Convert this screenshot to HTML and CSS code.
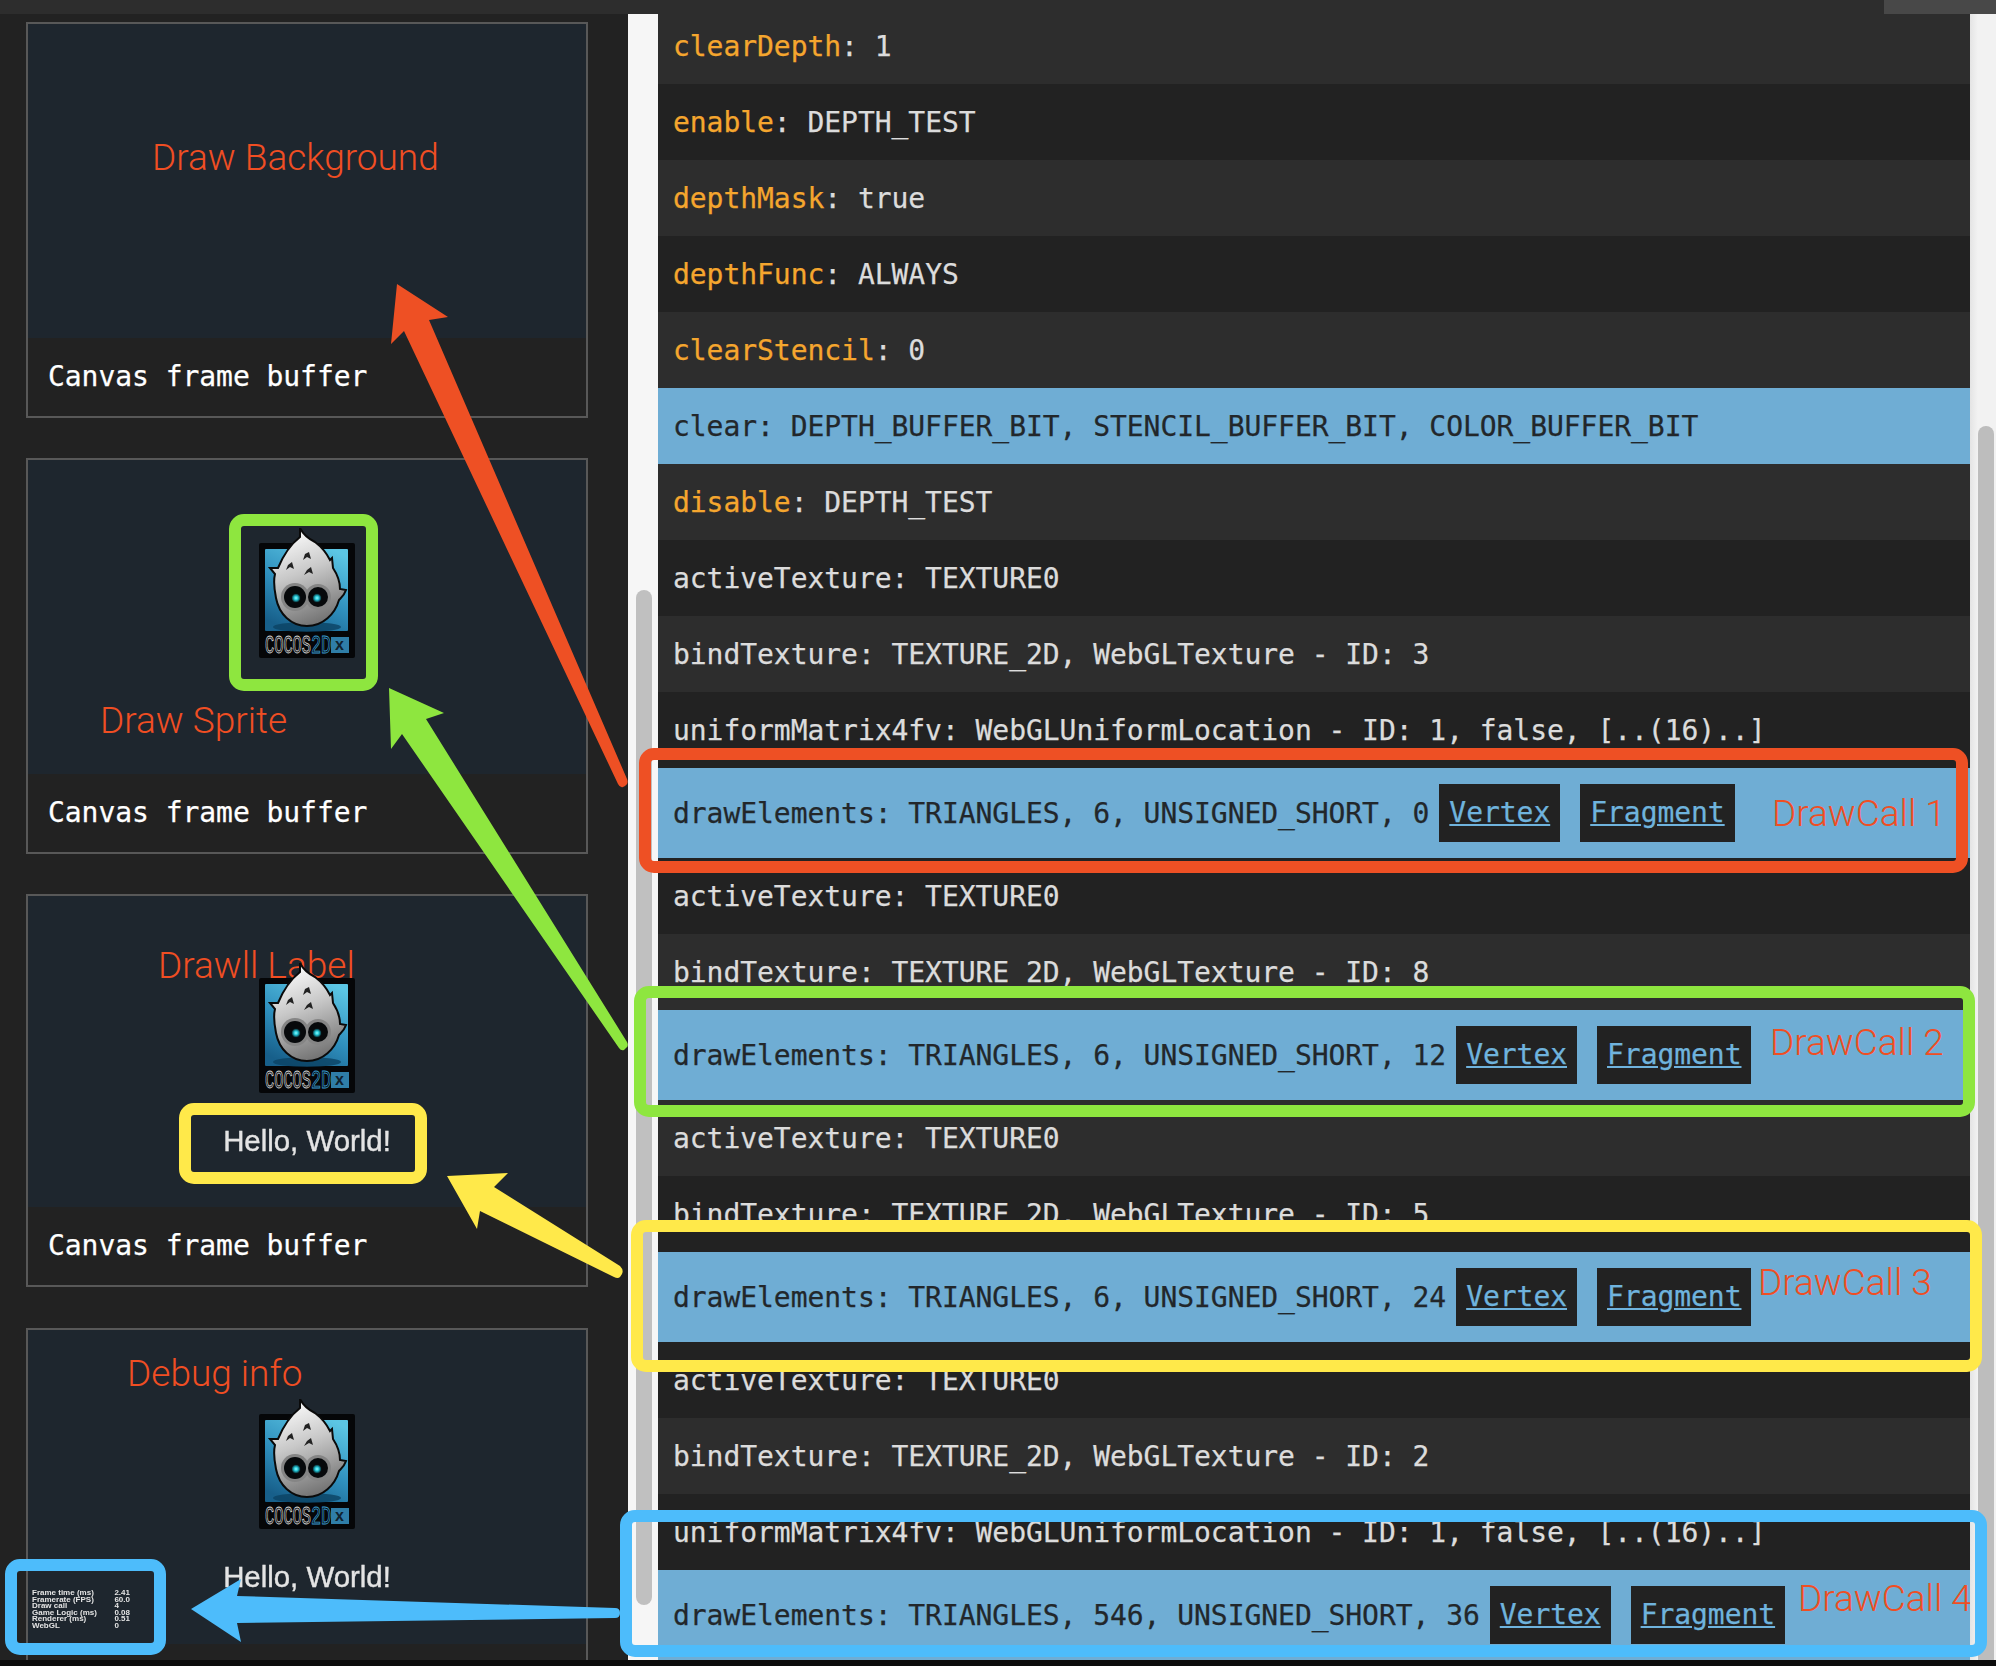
FILE: index.html
```html
<!DOCTYPE html>
<html lang="en">
<head>
    <meta charset="UTF-8">
    <title>WebGL frame capture</title>
    <link rel="stylesheet" href="styles.css">
</head>
<body>
    <svg class="defs" width="0" height="0">
        <defs>
            <linearGradient id="sky" x1="0.8" y1="0" x2="0.3" y2="1">
                <stop offset="0" stop-color="#5cc6e4"/>
                <stop offset="0.55" stop-color="#2f8fbd"/>
                <stop offset="1" stop-color="#175f8a"/>
            </linearGradient>
            <linearGradient id="shell" x1="0.3" y1="0" x2="0.6" y2="1">
                <stop offset="0" stop-color="#ffffff"/>
                <stop offset="0.45" stop-color="#c8c8c8"/>
                <stop offset="1" stop-color="#707070"/>
            </linearGradient>
            <radialGradient id="pupil">
                <stop offset="0" stop-color="#8ffcff"/>
                <stop offset="0.45" stop-color="#23c4d4"/>
                <stop offset="1" stop-color="#07181e"/>
            </radialGradient>
            <symbol id="cocos-logo" viewBox="0 0 96 130">
                <rect x="0" y="15" width="96" height="115" rx="2" fill="#050608"/>
                <rect x="6" y="21" width="83" height="82" rx="1" fill="url(#sky)"/>
                <ellipse cx="48" cy="99" rx="34" ry="5" fill="#0b4263" opacity="0.8"/>
                <path d="M41 0 C44 6 50 11 56 14 C64 20 68 26 71 32 L73 30 L74 40 C78 46 81 54 81 61 L87 62 C85 68 82 70 80 72 C76 86 64 98 48 98 C32 98 20 86 17 70 C15 60 15 50 16 46 L11 40 L19 40 C24 28 32 16 41 9 Z" fill="url(#shell)" stroke="#0a0a0a" stroke-width="2"/>
                <path d="M46 26 L50 24 L52 31 L48 29 L44 32 Z M29 37 L33 34 L35 41 L31 39 L27 42 Z M48 42 L52 39 L54 46 L50 44 L45 47 Z" fill="#222"/>
                <circle cx="36" cy="69" r="14" fill="#858585"/>
                <circle cx="59" cy="69" r="13" fill="#858585"/>
                <circle cx="36" cy="69" r="11" fill="#07090b"/>
                <circle cx="59" cy="69" r="10" fill="#07090b"/>
                <circle cx="37" cy="70" r="4.5" fill="url(#pupil)"/>
                <circle cx="58" cy="70" r="4.5" fill="url(#pupil)"/>
                <text x="6" y="125" class="logo-word" textLength="46" lengthAdjust="spacingAndGlyphs">COCOS</text>
                <text x="52" y="125" class="logo-word logo-blue" textLength="20" lengthAdjust="spacingAndGlyphs">2D</text>
                <rect x="72" y="109" width="18" height="16" fill="#2f7ea8"/>
                <text x="76" y="122" class="logo-x">x</text>
            </symbol>
        </defs>
    </svg>

    <div class="topbar"><div class="topbar-tab"></div></div>

    <div class="main">
        <aside class="thumbs">
            <div class="card">
                <div class="card-image">
                    <div class="note note-background">Draw Background</div>
                </div>
                <div class="card-caption">Canvas frame buffer</div>
            </div>
            <div class="card">
                <div class="card-image">
                    <div class="note note-sprite">Draw Sprite</div>
                    <svg class="logo"><use href="#cocos-logo"/></svg>
                </div>
                <div class="card-caption">Canvas frame buffer</div>
            </div>
            <div class="card card-label">
                <div class="card-image">
                    <div class="note note-label">Drawll Label</div>
                    <svg class="logo"><use href="#cocos-logo"/></svg>
                    <div class="hello">Hello, World!</div>
                </div>
                <div class="card-caption">Canvas frame buffer</div>
            </div>
            <div class="card card-debug">
                <div class="card-image">
                    <div class="note note-debug">Debug info</div>
                    <svg class="logo"><use href="#cocos-logo"/></svg>
                    <div class="hello">Hello, World!</div>
                    <div class="stats">
                        <span>Frame time (ms)</span><span>2.41</span>
                        <span>Framerate (FPS)</span><span>60.0</span>
                        <span>Draw call</span><span>4</span>
                        <span>Game Logic (ms)</span><span>0.08</span>
                        <span>Renderer (ms)</span><span>0.51</span>
                        <span>WebGL</span><span>0</span>
                    </div>
                </div>
            </div>
        </aside>

        <div class="scrolltrack"><div class="thumb thumb-left"></div></div>

        <div class="commands">
            <div class="row"><span class="call"><b class="state">clearDepth</b>: 1</span></div>
            <div class="row"><span class="call"><b class="state">enable</b>: DEPTH_TEST</span></div>
            <div class="row"><span class="call"><b class="state">depthMask</b>: true</span></div>
            <div class="row"><span class="call"><b class="state">depthFunc</b>: ALWAYS</span></div>
            <div class="row"><span class="call"><b class="state">clearStencil</b>: 0</span></div>
            <div class="row row-blue"><span class="call">clear: DEPTH_BUFFER_BIT, STENCIL_BUFFER_BIT, COLOR_BUFFER_BIT</span></div>
            <div class="row"><span class="call"><b class="state">disable</b>: DEPTH_TEST</span></div>
            <div class="row"><span class="call">activeTexture: TEXTURE0</span></div>
            <div class="row"><span class="call">bindTexture: TEXTURE_2D, WebGLTexture - ID: 3</span></div>
            <div class="row"><span class="call">uniformMatrix4fv: WebGLUniformLocation - ID: 1, false, [..(16)..]</span></div>
            <div class="row row-draw">
                <span class="call">drawElements: TRIANGLES, 6, UNSIGNED_SHORT, 0</span>
                <a class="shader" href="#">Vertex</a>
                <a class="shader" href="#">Fragment</a>
                <div class="note note-call-1">DrawCall 1</div>
            </div>
            <div class="row"><span class="call">activeTexture: TEXTURE0</span></div>
            <div class="row"><span class="call">bindTexture: TEXTURE_2D, WebGLTexture - ID: 8</span></div>
            <div class="row row-draw">
                <span class="call">drawElements: TRIANGLES, 6, UNSIGNED_SHORT, 12</span>
                <a class="shader" href="#">Vertex</a>
                <a class="shader" href="#">Fragment</a>
                <div class="note note-call-2">DrawCall 2</div>
            </div>
            <div class="row"><span class="call">activeTexture: TEXTURE0</span></div>
            <div class="row"><span class="call">bindTexture: TEXTURE_2D, WebGLTexture - ID: 5</span></div>
            <div class="row row-draw">
                <span class="call">drawElements: TRIANGLES, 6, UNSIGNED_SHORT, 24</span>
                <a class="shader" href="#">Vertex</a>
                <a class="shader" href="#">Fragment</a>
                <div class="note note-call-3">DrawCall 3</div>
            </div>
            <div class="row"><span class="call">activeTexture: TEXTURE0</span></div>
            <div class="row"><span class="call">bindTexture: TEXTURE_2D, WebGLTexture - ID: 2</span></div>
            <div class="row"><span class="call">uniformMatrix4fv: WebGLUniformLocation - ID: 1, false, [..(16)..]</span></div>
            <div class="row row-draw">
                <span class="call">drawElements: TRIANGLES, 546, UNSIGNED_SHORT, 36</span>
                <a class="shader" href="#">Vertex</a>
                <a class="shader" href="#">Fragment</a>
                <div class="note note-call-4">DrawCall 4</div>
            </div>
        </div>

        <div class="scrolltrack scrolltrack-right"><div class="thumb thumb-right"></div></div>
    </div>

    <div class="bottomstrip"></div>

    <!-- hand drawn markup over the screenshot -->
    <svg class="markup" width="1996" height="1666" viewBox="0 0 1996 1666">
        <g class="box box-red"><rect x="645" y="754" width="1317" height="113" rx="9"/></g>
        <g class="box box-green">
            <rect x="640" y="992" width="1329" height="119" rx="9"/>
            <rect x="235" y="520" width="137" height="165" rx="9"/>
        </g>
        <g class="box box-yellow">
            <rect x="637" y="1226" width="1339" height="140" rx="9"/>
            <rect x="185" y="1109" width="236" height="69" rx="9"/>
        </g>
        <g class="box box-blue">
            <rect x="626" y="1516" width="1355" height="135" rx="9"/>
            <rect x="11" y="1565" width="149" height="84" rx="9"/>
        </g>
        <path class="arrow-red" d="M397 284 L448 317 L429 320 L627 779 Q629 784 625 786 L623 787 Q620 788 618 784 L404 331 L391 344 Z"/>
        <path class="arrow-green" d="M389 688 L444 713 L426 719 L627 1042 Q629 1046 626 1048 L624 1050 Q621 1051 619 1048 L402 734 L391 749 Z"/>
        <path class="arrow-yellow" d="M447 1176 L508 1173 L494 1187 L620 1266 Q624 1270 622 1274 L620 1277 Q618 1279 614 1277 L480 1211 L477 1229 Z"/>
        <path class="arrow-blue" d="M191 1609 L241 1579 L237 1596 L615 1608 Q620 1608 620 1613 Q620 1618 615 1618 L237 1623 L241 1642 Z"/>
    </svg>
</body>
</html>
```
FILE: styles.css
```css
html, body {
    margin: 0;
    padding: 0;
    width: 1996px;
    height: 1666px;
    overflow: hidden;
    background: #222;
}
body {
    position: relative;
    display: flex;
    flex-direction: column;
    font-family: "DejaVu Sans Mono", "Liberation Mono", monospace;
    font-size: 28px;
    letter-spacing: -0.05px;
    -webkit-text-stroke: 0.25px;
    color: #dcdcdc;
}
.defs {
    position: absolute;
}
.topbar {
    flex: none;
    height: 14px;
    background: #2d2d2d;
    display: flex;
    justify-content: flex-end;
}
.topbar-tab {
    width: 112px;
    background: #484848;
}
.main {
    flex: none;
    height: 1646px;
    display: flex;
    overflow: hidden;
}
.bottomstrip {
    flex: none;
    height: 6px;
    background: #0c0c0c;
}

/* left column with the frame buffer thumbnails */
.thumbs {
    flex: none;
    width: 628px;
    box-sizing: border-box;
    padding: 8px 0 0 26px;
    display: flex;
    flex-direction: column;
    gap: 40px;
    background: #222;
}
.card {
    flex: none;
    width: 562px;
    height: 396px;
    box-sizing: border-box;
    border: 2px solid #585858;
}
.card-image {
    position: relative;
    height: 314px;
    box-sizing: border-box;
    padding-top: 68px;
    display: flex;
    flex-direction: column;
    align-items: center;
    background: #1e262e;
}
.card-label {
    height: 393px;
    margin-bottom: 1px;
}
.card-label .card-image {
    height: 311px;
    padding-top: 67px;
}
.card-debug .card-image {
    padding-top: 69px;
}
.card-caption {
    height: 78px;
    line-height: 78px;
    padding-left: 20px;
    color: #fff;
    white-space: pre;
}
.logo {
    position: relative;
    z-index: 1;
    flex: none;
    width: 96px;
    height: 130px;
}
.logo-word {
    font-family: "Liberation Mono", monospace;
    font-size: 25px;
    fill: none;
    stroke: #d4d4d4;
    stroke-width: 0.9;
}
.logo-blue {
    stroke: #3a9ed0;
}
.logo-x {
    font-family: "Liberation Sans", sans-serif;
    font-size: 16px;
    font-weight: bold;
    -webkit-text-stroke: 0;
    fill: #10222e;
}
.hello {
    margin-top: 31px;
    font-family: "Liberation Sans", Arial, sans-serif;
    font-size: 29.4px;
    letter-spacing: 0;
    line-height: 34px;
    -webkit-text-stroke: 0.4px;
    color: #e4e4e4;
    filter: blur(0.5px);
}
.stats {
    position: absolute;
    left: 4px;
    top: 260px;
    width: 98px;
    display: grid;
    grid-template-columns: 1fr auto;
    font-family: "Liberation Sans", Arial, sans-serif;
    font-size: 8px;
    font-weight: bold;
    letter-spacing: 0;
    -webkit-text-stroke: 0;
    line-height: 6.6px;
    color: #e4e4e4;
    filter: blur(0.5px);
}

/* scrollbars */
.scrolltrack {
    position: relative;
    flex: none;
    width: 30px;
    background: #f6f6f6;
}
.scrolltrack-right {
    width: 26px;
    background: linear-gradient(to right, #e4e4e4, #f2f2f2 30%, #f2f2f2);
}
.thumb {
    position: absolute;
    width: 16px;
    background: #c0c0c0;
    border-radius: 8px;
}
.thumb-left {
    left: 8px;
    top: 576px;
    height: 1015px;
}
.thumb-right {
    left: 8px;
    top: 412px;
    height: 1243px;
    background: #bdbdbd;
}

/* command list */
.commands {
    flex: none;
    width: 1312px;
    margin-top: -6px;
}
.row {
    position: relative;
    height: 76px;
    box-sizing: border-box;
    display: flex;
    align-items: center;
    padding: 1px 0 0 15px;
    white-space: pre;
    background: #222;
}
.row:nth-child(odd) {
    background: #2d2d2d;
}
.row.row-blue, .row.row-draw {
    background: #6fadd4;
    color: #22272b;
}
.row-draw {
    height: 90px;
    padding-top: 0;
}
.state {
    font-weight: normal;
    color: #f5a62e;
}
.shader {
    flex: none;
    height: 58px;
    line-height: 58px;
    padding: 0 10px;
    margin-left: 10px;
    background: #222;
    color: #6fb3dd;
}
.shader + .shader {
    margin-left: 20px;
}

/* red notes typed on the screenshot */
.note {
    position: absolute;
    z-index: 0;
    font-family: Roboto, "Liberation Sans", sans-serif;
    font-weight: 300;
    font-size: 37px;
    letter-spacing: 0;
    -webkit-text-stroke: 0;
    line-height: 42px;
    white-space: nowrap;
    color: #f04e23;
}
.note-background { left: 124px; top: 113px; }
.note-sprite { left: 72px; top: 240px; }
.note-label { left: 130px; top: 49px; }
.note-debug { left: 99px; top: 23px; }
.row .note-call-1 { left: 1114px; top: 25px; }
.row .note-call-2 { left: 1112px; top: 12px; }
.row .note-call-3 { left: 1100px; top: 10px; }
.row .note-call-4 { left: 1140px; top: 8px; }

/* annotation layer */
.markup {
    position: absolute;
    left: 0;
    top: 0;
    z-index: 5;
    pointer-events: none;
}
.box rect {
    fill: none;
    stroke-width: 12;
}
.box-red rect { stroke: #ee5024; }
.box-green rect { stroke: #8ee63f; }
.box-yellow rect { stroke: #ffe94a; }
.box-blue rect { stroke: #4dbcfb; }
.arrow-red { fill: #ee5024; }
.arrow-green { fill: #8ee63f; }
.arrow-yellow { fill: #ffe94a; }
.arrow-blue { fill: #4dbcfb; }
```
